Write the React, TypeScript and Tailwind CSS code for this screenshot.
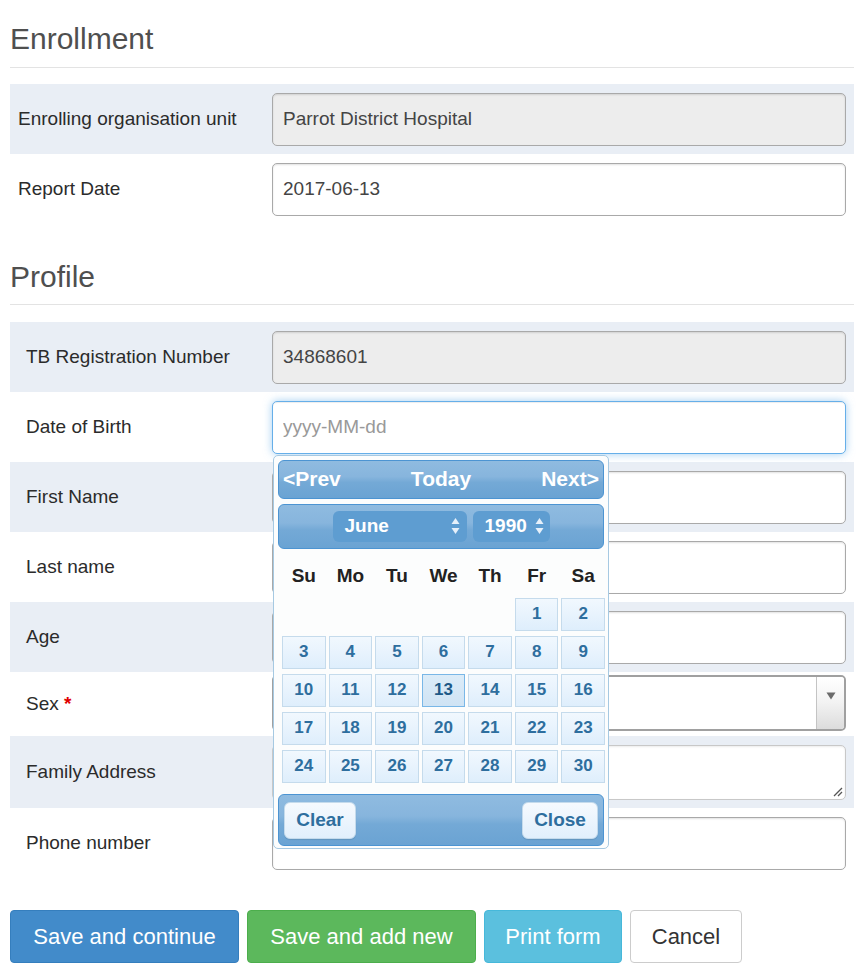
import React from "react";

const font = "font-['Liberation_Sans',Arial,Helvetica,sans-serif]";

const headerBar =
  "rounded-[6px] border border-[#4c94d2] bg-[linear-gradient(to_bottom,#8fbbe0_0%,#87b5dd_42%,#74a9d6_58%,#6aa3d3_100%)] text-white font-bold";

const days: (number | null)[] = [
  null, null, null, null, null, 1, 2,
  3, 4, 5, 6, 7, 8, 9,
  10, 11, 12, 13, 14, 15, 16,
  17, 18, 19, 20, 21, 22, 23,
  24, 25, 26, 27, 28, 29, 30,
];

function UpDown() {
  return (
    <svg width="9" height="18" viewBox="0 0 9 18" className="shrink-0">
      <path d="M4.5 1 L8.5 7 H0.5 Z" fill="#e6f0fa" />
      <path d="M4.5 17 L8.5 11 H0.5 Z" fill="#e6f0fa" />
    </svg>
  );
}

function DatePicker() {
  return (
    <div className="absolute left-[1px] top-[54px] z-10 w-[336px] rounded-[5px] border border-[#a6c9e2] bg-[#fcfdfd] px-[4px] pt-[4px] pb-[2px]">
      <div className={`${headerBar} flex h-[39px] items-center justify-between px-[4px] text-[21px]`}>
        <span>&lt;Prev</span>
        <span>Today</span>
        <span>Next&gt;</span>
      </div>
      <div className={`${headerBar} mt-[5px] flex h-[45px] items-center justify-center gap-[6px] text-[19px]`}>
        <div className="flex h-[31px] w-[134px] items-center justify-between rounded-[6px] bg-[#5e9dd1] pl-[12px] pr-[7px]">
          <span>June</span>
          <UpDown />
        </div>
        <div className="flex h-[31px] w-[77px] items-center justify-between rounded-[6px] bg-[#5e9dd1] pl-[12px] pr-[6px]">
          <span>1990</span>
          <UpDown />
        </div>
      </div>
      <div className="mt-[13px] ml-[4px] grid h-[25px] w-[323px] grid-cols-7 gap-x-[3px] text-[19px] font-bold text-[#222]">
        {["Su", "Mo", "Tu", "We", "Th", "Fr", "Sa"].map((d) => (
          <div key={d} className="flex items-center justify-center">
            {d}
          </div>
        ))}
      </div>
      <div className="mt-[11px] ml-[4px] grid w-[323px] grid-cols-7 gap-x-[3px] gap-y-[5px]">
        {days.map((d, i) =>
          d === null ? (
            <div key={i} className="h-[33px]" />
          ) : d === 13 ? (
            <div
              key={i}
              className="flex h-[33px] items-center justify-center border border-[#79b7e7] bg-[linear-gradient(to_bottom,#dcecf8,#cfe3f4)] text-[17px] font-bold text-[#1d5987]"
            >
              {d}
            </div>
          ) : (
            <div
              key={i}
              className="flex h-[33px] items-center justify-center border border-[#c5dbec] bg-[linear-gradient(to_bottom,#f1f8fe,#e8f3fd_50%,#deeefc)] text-[17px] font-bold text-[#2e6e9e]"
            >
              {d}
            </div>
          )
        )}
      </div>
      <div className={`${headerBar} mt-[11px] flex h-[52px] items-center justify-between px-[5px] pt-[2px]`}>
        <div className="flex h-[37px] w-[72px] items-center justify-center rounded-[6px] border border-[#c5dbec] bg-[linear-gradient(to_bottom,#f6fafe,#e1effc)] text-[19px] text-[#2e6e9e] shadow-[0_1px_1px_rgba(0,0,0,0.1)]">
          Clear
        </div>
        <div className="flex h-[37px] w-[76px] items-center justify-center rounded-[6px] border border-[#c5dbec] bg-[linear-gradient(to_bottom,#f6fafe,#e1effc)] text-[19px] text-[#2e6e9e] shadow-[0_1px_1px_rgba(0,0,0,0.1)]">
          Close
        </div>
      </div>
    </div>
  );
}

function Input({
  value,
  placeholder,
  disabled,
  focused,
}: {
  value?: string;
  placeholder?: string;
  disabled?: boolean;
  focused?: boolean;
}) {
  const cls = focused
    ? "border-[#66afe9] shadow-[inset_0_1px_1px_rgba(0,0,0,0.075),0_0_8px_rgba(102,175,233,0.6)]"
    : "border-[#a9a9a9] shadow-[inset_0_1px_2px_rgba(0,0,0,0.12)]";
  return (
    <input
      readOnly
      value={value ?? ""}
      placeholder={placeholder}
      className={`h-[53px] w-full rounded-[5px] border-[1.5px] px-[10px] text-[19px] text-[#444] outline-none placeholder:text-[#999] ${cls} ${
        disabled ? "bg-[#ededed]" : "bg-white"
      }`}
    />
  );
}

function Row({
  label,
  shaded,
  indent,
  height,
  children,
}: {
  label: React.ReactNode;
  shaded?: boolean;
  indent?: boolean;
  height: string;
  children: React.ReactNode;
}) {
  return (
    <div className={`flex items-center ${height} ${shaded ? "bg-[#e9eef5]" : ""}`}>
      <div className={`w-[262px] shrink-0 text-[19px] text-[#2b2b2b] ${indent ? "pl-[16px]" : "pl-[8px]"}`}>
        {label}
      </div>
      <div className="relative flex-1 pr-[8px]">{children}</div>
    </div>
  );
}

function Heading({ children, className }: { children: React.ReactNode; className: string }) {
  return (
    <h3 className={`border-b border-[#e3e3e3] pb-[11px] text-[30px] leading-[33px] text-[#4f4f4f] ${className}`}>
      {children}
    </h3>
  );
}

export default function App() {
  return (
    <div className={`min-h-screen bg-white pl-[10px] pr-[14px] pb-[20px] ${font}`}>
      <Heading className="pt-[22px] pb-[12px]">Enrollment</Heading>
      <div className="mt-[16px]">
        <Row label="Enrolling organisation unit" shaded height="h-[70px]">
          <Input value="Parrot District Hospital" disabled />
        </Row>
        <Row label="Report Date" height="h-[70px]">
          <Input value="2017-06-13" />
        </Row>
      </div>

      <Heading className="mt-[36px]">Profile</Heading>
      <div className="mt-[17px]">
        <Row label="TB Registration Number" shaded indent height="h-[70px]">
          <Input value="34868601" disabled />
        </Row>
        <Row label="Date of Birth" indent height="h-[70px]">
          <Input placeholder="yyyy-MM-dd" focused />
          <DatePicker />
        </Row>
        <Row label="First Name" shaded indent height="h-[70px]">
          <Input />
        </Row>
        <Row label="Last name" indent height="h-[70px]">
          <Input />
        </Row>
        <Row label="Age" shaded indent height="h-[70px]">
          <Input />
        </Row>
        <Row
          label={
            <span>
              Sex <span className="font-bold text-[#e00000]">*</span>
            </span>
          }
          indent
          height="h-[64px]"
        >
          <div className="mt-[-2px] flex h-[56px] w-full overflow-hidden rounded-[5px] border-2 border-[#a0a0a0] bg-white">
            <div className="flex-1" />
            <div className="flex w-[28px] justify-center border-l border-[#c4c4c4] bg-[linear-gradient(to_bottom,#ffffff,#f2f2f2_50%,#dcdcdc)] pt-[15px]">
              <svg width="10" height="8" viewBox="0 0 10 8">
                <path d="M0.5 0.5 H9.5 L5 7.5 Z" fill="#6b6b6b" />
              </svg>
            </div>
          </div>
        </Row>
        <Row label="Family Address" shaded indent height="h-[72px]">
          <div className="relative h-[55px] w-full rounded-[5px] border-[1.5px] border-[#c8c8c8] bg-white shadow-[inset_0_1px_2px_rgba(0,0,0,0.08)]">
            <svg width="12" height="12" viewBox="0 0 12 12" className="absolute right-[2px] bottom-[2px]">
              <path d="M11 3 L3 11 M11 7 L7 11" stroke="#555" strokeWidth="1.3" />
            </svg>
          </div>
        </Row>
        <Row label="Phone number" indent height="h-[70px]">
          <Input />
        </Row>
      </div>

      <div className="mt-[32px] flex gap-[8px] text-[22px]">
        <button className="h-[53px] w-[229px] rounded-[4px] border border-[#357ebd] bg-[#428bca] text-white">
          Save and continue
        </button>
        <button className="h-[53px] w-[229px] rounded-[4px] border border-[#4cae4c] bg-[#5cb85c] text-white">
          Save and add new
        </button>
        <button className="h-[53px] w-[138px] rounded-[4px] border border-[#46b8da] bg-[#5bc0de] text-white">
          Print form
        </button>
        <button className="h-[53px] w-[112px] rounded-[4px] border border-[#ccc] bg-white text-[#333]">
          Cancel
        </button>
      </div>
    </div>
  );
}
